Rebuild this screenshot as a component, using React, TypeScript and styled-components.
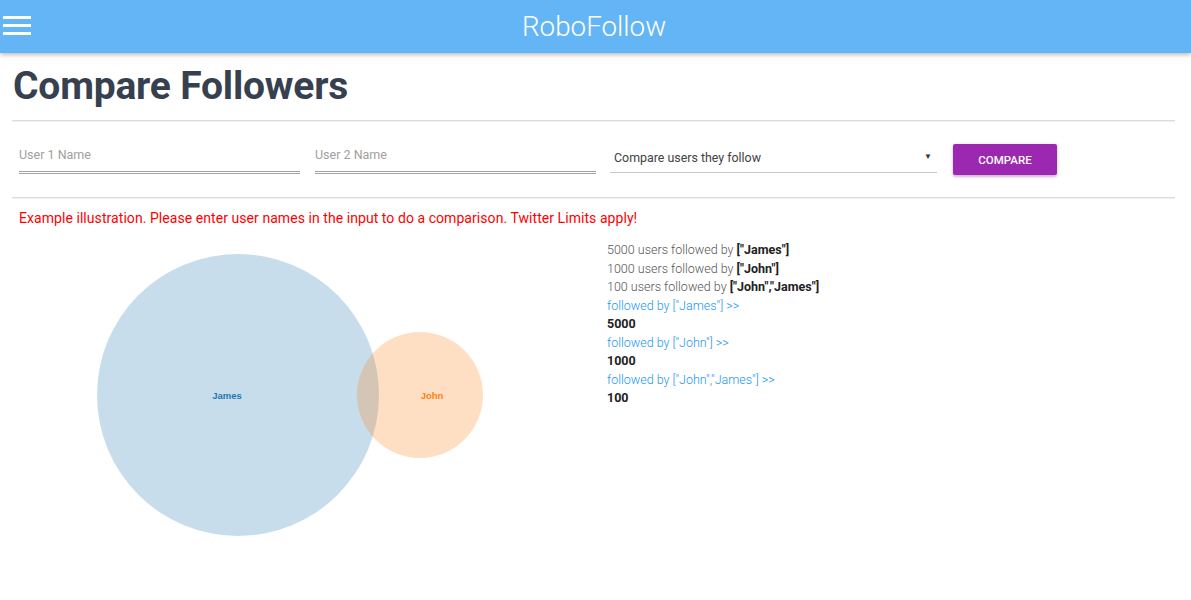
import React from "react";
import styled, { createGlobalStyle } from "styled-components";

const Global = createGlobalStyle`
  html, body { margin: 0; padding: 0; background: #fff; }
  body { font-family: Roboto, "Liberation Sans", Arial, sans-serif; }
  * { box-sizing: border-box; }
`;

const Header = styled.header`
  height: 53px;
  background: #64b5f6;
  box-shadow: 0 2px 4px rgba(0, 0, 0, 0.25);
  position: relative;
  display: flex;
  align-items: center;
  justify-content: center;
`;

const MenuButton = styled.button`
  position: absolute;
  left: 3px;
  top: 16px;
  width: 28px;
  height: 19px;
  padding: 0;
  border: 0;
  background: transparent;
  display: flex;
  flex-direction: column;
  justify-content: space-between;
  cursor: pointer;
`;

const Bar = styled.span`
  display: block;
  height: 3px;
  width: 28px;
  background: #fff;
`;

const Brand = styled.div`
  color: #fff;
  font-size: 27.8px;
  font-weight: 300;
  margin-right: 3px;
`;

const Main = styled.main`
  padding: 0 16px 0 12px;
`;

const Title = styled.h1`
  margin: 0;
  padding: 10px 0 0 1px;
  height: 67px;
  font-size: 39px;
  font-weight: 700;
  color: #36404f;
  letter-spacing: -0.2px;
`;

const Divider = styled.hr`
  margin: 0;
  border: 0;
  border-top: 1px solid #dcdcdc;
  border-bottom: 1px solid #f0f0f0;
`;

const FormRow = styled.div`
  height: 75px;
  display: flex;
  align-items: flex-start;
  padding: 22px 0 0 7px;
  gap: 15px;
`;

const TextField = styled.input`
  width: 281px;
  height: 30px;
  border: 0;
  border-bottom: 3px double #a3a3a3;
  font-family: Roboto, "Liberation Sans", sans-serif;
  font-size: 12.5px;
  padding: 0 0 6px 0;
  color: #333;
  background: transparent;
  outline: none;
  &::placeholder { color: #a0a0a0; }
`;

const SelectWrap = styled.div`
  position: relative;
  width: 327px;
  height: 28px;
  border-bottom: 1px solid #c8c8c8;
  margin-top: 1px;
  margin-left: -1px;
`;

const SelectText = styled.div`
  padding: 5px 0 0 4px;
  font-size: 12.4px;
  color: #424242;
`;

const Arrow = styled.span`
  position: absolute;
  right: 5px;
  top: 7px;
  font-size: 8px;
  color: #333;
`;

const CompareButton = styled.button`
  margin-left: 1px;
  width: 104px;
  height: 31px;
  border: 0;
  border-radius: 2px;
  background: #9c27b0;
  color: #fff;
  font-family: Roboto, "Liberation Sans", sans-serif;
  font-size: 11.5px;
  font-weight: 500;
  text-transform: uppercase;
  box-shadow: 0 2px 2px rgba(156, 39, 176, 0.25), 0 1px 4px rgba(0, 0, 0, 0.15);
`;

const Notice = styled.p`
  margin: 0;
  padding: 11px 0 0 7px;
  height: 37px;
  font-size: 14px;
  letter-spacing: 0.06px;
  color: #ff0000;
`;

const Results = styled.section`
  display: grid;
  grid-template-columns: 595px 1fr;
`;

const VennSvg = styled.svg`
  display: block;
  width: 595px;
  height: 320px;
  margin-top: -1px;
`;

const Stats = styled.div`
  padding-top: 5px;
  font-size: 12.5px;
  line-height: 18.5px;
  color: #555;
  font-weight: 300;
`;

const Line = styled.div``;

const Strong = styled.b`
  font-weight: 700;
  color: #222;
`;

const Link = styled.a`
  color: #2196f3;
  text-decoration: none;
  font-weight: 300;
  display: block;
`;

const Count = styled.div`
  font-weight: 700;
  color: #222;
`;

export default function App() {
  return (
    <>
      <Global />
      <Header>
        <MenuButton aria-label="menu">
          <Bar />
          <Bar />
          <Bar />
        </MenuButton>
        <Brand>RoboFollow</Brand>
      </Header>
      <Main>
        <Title>Compare Followers</Title>
        <Divider />
        <FormRow>
          <TextField placeholder="User 1 Name" />
          <TextField placeholder="User 2 Name" />
          <SelectWrap>
            <SelectText>Compare users they follow</SelectText>
            <Arrow>▼</Arrow>
          </SelectWrap>
          <CompareButton>Compare</CompareButton>
        </FormRow>
        <Divider />
        <Notice>
          Example illustration. Please enter user names in the input to do a comparison. Twitter Limits apply!
        </Notice>
        <Results>
          <VennSvg viewBox="0 0 595 320">
            <circle cx="226" cy="160" r="141" fill="rgb(31,119,180)" fillOpacity="0.25" />
            <circle cx="408" cy="160" r="63" fill="rgb(255,127,14)" fillOpacity="0.25" />
            <text x="215" y="163.5" textAnchor="middle" fontFamily="'Liberation Sans', Arial, sans-serif" fontSize="9.5" fontWeight="700" fill="#1f77b4">James</text>
            <text x="420" y="163.5" textAnchor="middle" fontFamily="'Liberation Sans', Arial, sans-serif" fontSize="9.5" fontWeight="700" fill="#ff7f0e">John</text>
          </VennSvg>
          <Stats>
            <Line>5000 users followed by <Strong>["James"]</Strong></Line>
            <Line>1000 users followed by <Strong>["John"]</Strong></Line>
            <Line>100 users followed by <Strong>["John","James"]</Strong></Line>
            <Link href="#">followed by ["James"] &gt;&gt;</Link>
            <Count>5000</Count>
            <Link href="#">followed by ["John"] &gt;&gt;</Link>
            <Count>1000</Count>
            <Link href="#">followed by ["John","James"] &gt;&gt;</Link>
            <Count>100</Count>
          </Stats>
        </Results>
      </Main>
    </>
  );
}
